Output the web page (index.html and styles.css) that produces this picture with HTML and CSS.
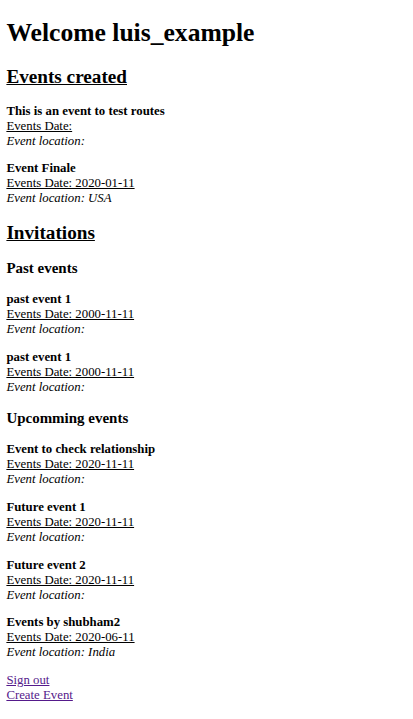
FILE: index.html
```html
<!DOCTYPE html>
<html lang="en">
<head>
<meta charset="utf-8">
<title>Welcome luis_example</title>
<link rel="stylesheet" href="styles.css">
</head>
<body class="page">
<h1 class="title">Welcome luis_example</h1>

<h2 class="section-title"><u>Events created</u></h2>
<div class="event">
  <strong class="event-name">This is an event to test routes</strong><br>
  <a class="event-date" href="#">Events Date: </a><br>
  <em class="event-location">Event location: </em>
</div>
<div class="event">
  <strong class="event-name">Event Finale</strong><br>
  <a class="event-date" href="#">Events Date: 2020-01-11</a><br>
  <em class="event-location">Event location: USA</em>
</div>

<h2 class="section-title"><u>Invitations</u></h2>
<h3 class="sub-title">Past events</h3>
<div class="event">
  <strong class="event-name">past event 1</strong><br>
  <a class="event-date" href="#">Events Date: 2000-11-11</a><br>
  <em class="event-location">Event location: </em>
</div>
<div class="event">
  <strong class="event-name">past event 1</strong><br>
  <a class="event-date" href="#">Events Date: 2000-11-11</a><br>
  <em class="event-location">Event location: </em>
</div>

<h3 class="sub-title">Upcomming events</h3>
<div class="event">
  <strong class="event-name">Event to check relationship</strong><br>
  <a class="event-date" href="#">Events Date: 2020-11-11</a><br>
  <em class="event-location">Event location: </em>
</div>
<div class="event">
  <strong class="event-name">Future event 1</strong><br>
  <a class="event-date" href="#">Events Date: 2020-11-11</a><br>
  <em class="event-location">Event location: </em>
</div>
<div class="event">
  <strong class="event-name">Future event 2</strong><br>
  <a class="event-date" href="#">Events Date: 2020-11-11</a><br>
  <em class="event-location">Event location: </em>
</div>
<div class="event">
  <strong class="event-name">Events by shubham2</strong><br>
  <a class="event-date" href="#">Events Date: 2020-06-11</a><br>
  <em class="event-location">Event location: India</em>
</div>

<div class="nav">
  <a class="nav-link" href="#">Sign out</a><br>
  <a class="nav-link" href="#">Create Event</a>
</div>
</body>
</html>
```
FILE: styles.css
```css
html {
  background: #ffffff;
}
.page {
  margin: 6.4px;
  font-family: "Liberation Serif", "Times New Roman", serif;
  font-size: 12.8px;
  color: #000000;
}
.title {
  font-size: 2em;
  margin: 11.2px 0 18.2px;
  font-weight: bold;
}
.section-title {
  font-size: 1.5em;
  margin: 0.83em 0;
  font-weight: bold;
}
.sub-title {
  font-size: 1.17em;
  margin: 1em 0;
  font-weight: bold;
}
.event {
  margin: 1em 0;
}
.event-name {
  font-weight: bold;
}
.event-date {
  color: #000000;
  text-decoration: underline;
}
.event-location {
  font-style: italic;
}
.nav {
  margin: 1em 0;
}
.nav-link {
  color: #551a8b;
  text-decoration: underline;
}
```
